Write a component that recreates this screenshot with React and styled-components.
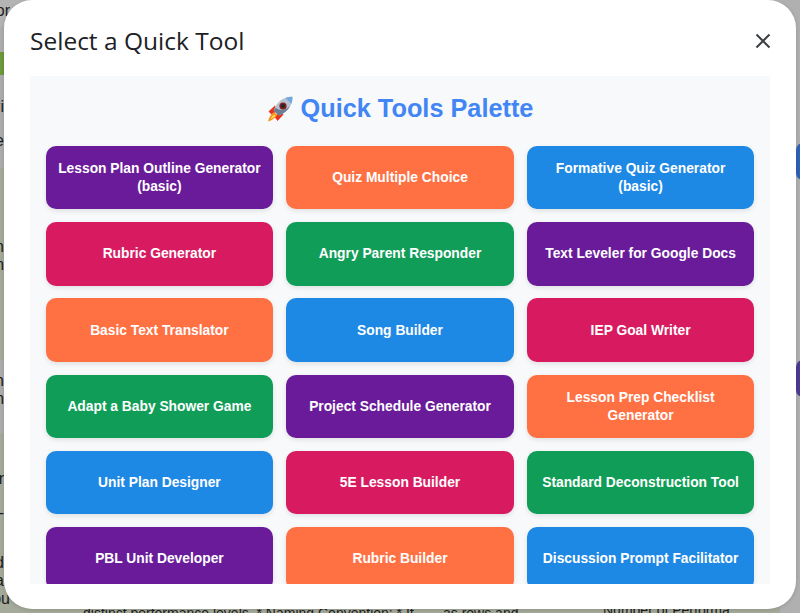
import React from "react";
import styled, { createGlobalStyle } from "styled-components";

const GlobalStyle = createGlobalStyle`
  html, body {
    margin: 0;
    height: 100%;
    overflow: hidden;
    background: #b0b0b0;
  }
`;

const Page = styled.div`
  position: relative;
  width: 800px;
  height: 613px;
  overflow: hidden;
  font-family: "Liberation Sans", Arial, sans-serif;
`;

// what is left visible of the page behind the dialog
const Backdrop = styled.div`
  display: flex;
  height: 100%;
  color: #1c1c1c;
  font-size: 16px;
  line-height: 18px;
`;

const MainColumn = styled.div`
  flex: 1;
  display: flex;
  flex-direction: column;
  min-width: 0;
`;

const SideColumn = styled.div`
  flex: 0 0 20px;
  background: #b0b0b0;
`;

const Band = styled.div`
  flex: ${(props) => (props.$h ? `0 0 ${props.$h}px` : "1")};
  box-sizing: border-box;
  background: ${(props) => props.$bg};
  padding-top: ${(props) => props.$pad || 0}px;
  overflow: hidden;
`;

const Fragment = styled.div`
  display: flex;
  justify-content: flex-end;
  width: ${(props) => props.$w || 4}px;
  margin-top: ${(props) => props.$top || 0}px;
  overflow: hidden;
  white-space: nowrap;
`;

const BottomRow = styled.div`
  display: flex;
  margin-top: -3px;
  font-size: 14px;
  line-height: 16px;
`;

const BottomCell = styled.div`
  flex: 0 0 ${(props) => props.$w}px;
  box-sizing: border-box;
  padding-left: ${(props) => props.$pad}px;
  margin-top: ${(props) => props.$top || 0}px;
  white-space: nowrap;
`;

const SidePill = styled.div`
  position: absolute;
  left: 796px;
  top: ${(props) => props.$top}px;
  width: 14px;
  height: 37px;
  border-radius: 10px;
  background: ${(props) => props.$bg};
`;

const Modal = styled.div`
  position: absolute;
  left: 4px;
  right: 4px;
  top: 0;
  height: 609px;
  box-sizing: border-box;
  display: flex;
  flex-direction: column;
  padding: 0 26px 25px;
  background: #fff;
  border-radius: 28px;
  box-shadow: 0 1px 4px rgba(0, 0, 0, 0.15);
`;

const Header = styled.div`
  flex: 0 0 76px;
  display: flex;
  align-items: center;
  justify-content: space-between;
  padding-top: 6px;
  box-sizing: border-box;
`;

const ModalTitle = styled.div`
  font-family: "Open Sans", sans-serif;
  font-size: 24.5px;
  line-height: 32px;
  color: #202124;
`;

const CloseButton = styled.button`
  display: flex;
  padding: 0;
  margin-right: -0.5px;
  border: 0;
  background: none;
  color: #3c4043;
  cursor: pointer;
`;

const Panel = styled.div`
  flex: 1;
  min-height: 0;
  overflow: hidden;
  box-sizing: border-box;
  padding: 15.5px;
  background: #f8f9fa;
`;

const PaletteTitle = styled.h2`
  display: flex;
  align-items: center;
  justify-content: center;
  gap: 8px;
  height: 34px;
  margin: 0 0 20.5px;
  font-size: 25.3px;
  font-weight: 700;
  color: #4285f4;
`;

const ToolGrid = styled.div`
  display: grid;
  grid-template-columns: repeat(3, 1fr);
  grid-auto-rows: 63.4px;
  gap: 12.8px;
`;

const ToolButton = styled.button`
  padding: 1px 8px 0;
  border: 0;
  border-radius: 10px;
  background: ${(props) => props.$color};
  box-shadow: 0 2px 5px rgba(0, 0, 0, 0.1);
  color: #fff;
  font-family: "Liberation Sans", Arial, sans-serif;
  font-size: 13.8px;
  font-weight: 700;
  line-height: 18px;
  cursor: pointer;
`;

const PURPLE = "#6a1b9a";
const ORANGE = "#ff7043";
const BLUE = "#1e88e5";
const PINK = "#d81b60";
const GREEN = "#0f9d58";

const tools = [
  ["Lesson Plan Outline Generator (basic)", PURPLE],
  ["Quiz Multiple Choice", ORANGE],
  ["Formative Quiz Generator (basic)", BLUE],
  ["Rubric Generator", PINK],
  ["Angry Parent Responder", GREEN],
  ["Text Leveler for Google Docs", PURPLE],
  ["Basic Text Translator", ORANGE],
  ["Song Builder", BLUE],
  ["IEP Goal Writer", PINK],
  ["Adapt a Baby Shower Game", GREEN],
  ["Project Schedule Generator", PURPLE],
  ["Lesson Prep Checklist Generator", ORANGE],
  ["Unit Plan Designer", BLUE],
  ["5E Lesson Builder", PINK],
  ["Standard Deconstruction Tool", GREEN],
  ["PBL Unit Developer", PURPLE],
  ["Rubric Builder", ORANGE],
  ["Discussion Prompt Facilitator", BLUE],
];

const RocketIcon = () => (
  <svg width="26" height="26" viewBox="0 0 26 26">
    <path d="M1.5 15.5 L8 9.5 L10.5 15.5 L4.5 18.5 Z" fill="#e8321f" />
    <path d="M10.5 25 L16.5 18.5 L11 15.5 L8 21.5 Z" fill="#e8321f" />
    <path d="M7 16 L10.2 19.2 C8.2 22 5 24.6 1 25.4 C1.8 21.4 4.2 18 7 16 Z" fill="#f7931e" />
    <path d="M7.4 18.4 L8.4 19.4 C7.2 21 5.6 22.4 3.4 23.2 C4.2 21.2 5.6 19.6 7.4 18.4 Z" fill="#ffe14d" />
    <path d="M25.4 0.8 C19 0.6 12.6 3.6 8.6 10.2 L6.6 14.6 L11.6 19.6 L16 17.6 C22.6 13.6 25.8 7.2 25.4 0.8 Z" fill="#b4c2d4" />
    <path d="M6.6 14.6 L11.6 19.6 L16 17.6 C19 15.7 21.4 13 23 10.2 C18.5 14 13 15.2 8.8 11.8 L6.6 14.6 Z" fill="#6d7f96" />
    <path d="M25.4 0.8 C23 0.7 20.8 1.1 18.6 1.9 L24.4 7.7 C25.1 5.5 25.5 3.1 25.4 0.8 Z" fill="#6fa8dc" />
    <circle cx="16" cy="10" r="3.6" fill="#8a1f1a" />
    <circle cx="16" cy="10" r="2.1" fill="#23282e" />
  </svg>
);

const CloseIcon = () => (
  <svg width="16" height="16" viewBox="0 0 16 16" fill="none" stroke="currentColor" strokeWidth="2">
    <path d="M1.5 1.5 L14.5 14.5 M14.5 1.5 L1.5 14.5" />
  </svg>
);

const App = () => (
  <Page>
    <GlobalStyle />
    <Backdrop>
      <MainColumn>
        <Band $h={27} $bg="#b4b4b4" $pad={2}>
          <Fragment $w={10}>or</Fragment>
        </Band>
        <Band $h={25} $bg="#aeaeae" />
        <Band $h={23} $bg="#6e9a3a" />
        <Band $h={93} $bg="#adadad" $pad={23}>
          <Fragment>ri</Fragment>
          <Fragment $top={16}>e</Fragment>
        </Band>
        <Band $h={192} $bg="#a5ab9b" $pad={70}>
          <Fragment>n</Fragment>
          <Fragment>m</Fragment>
        </Band>
        <Band $h={73} $bg="#adadad" $pad={12}>
          <Fragment>n</Fragment>
          <Fragment>m</Fragment>
        </Band>
        <Band $bg="#a5ab9b" $pad={37}>
          <Fragment>r</Fragment>
          <Fragment $top={16}>-</Fragment>
          <Fragment $top={32}>d</Fragment>
          <Fragment>a</Fragment>
          <Fragment $w={10}>ou</Fragment>
          <BottomRow>
            <BottomCell $w={438} $pad={83}>distinct performance levels. * Naming Convention: * If</BottomCell>
            <BottomCell $w={165} $pad={5}>as rows and</BottomCell>
            <BottomCell $w={177} $pad={0} $top={-3}>Number of Performa</BottomCell>
          </BottomRow>
        </Band>
      </MainColumn>
      <SideColumn />
    </Backdrop>
    <SidePill $top={143} $bg="#2f62b8" />
    <SidePill $top={360} $bg="#4d3a94" />

    <Modal>
      <Header>
        <ModalTitle>Select a Quick Tool</ModalTitle>
        <CloseButton aria-label="Close">
          <CloseIcon />
        </CloseButton>
      </Header>
      <Panel>
        <PaletteTitle>
          <RocketIcon />
          Quick Tools Palette
        </PaletteTitle>
        <ToolGrid>
          {tools.map(([label, color]) => (
            <ToolButton key={label} $color={color}>{label}</ToolButton>
          ))}
        </ToolGrid>
      </Panel>
    </Modal>
  </Page>
);

export default App;
